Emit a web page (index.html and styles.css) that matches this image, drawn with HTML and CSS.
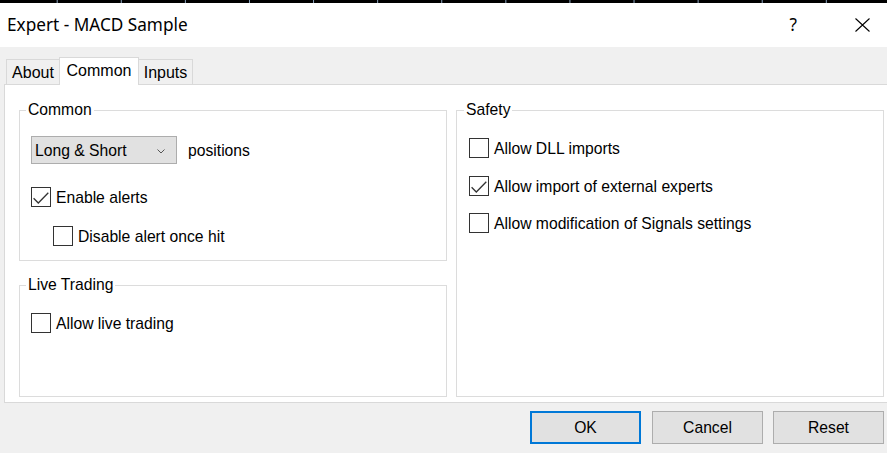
FILE: index.html
```html
<!DOCTYPE html>
<html>
<head>
<meta charset="utf-8">
<title>Expert - MACD Sample</title>
<link rel="stylesheet" href="styles.css">
</head>
<body>
<div class="window">
  <div class="topbar"></div>
  <div class="titlebar">
    <div class="title">Expert - MACD Sample</div>
    <div class="help">?</div>
    <svg class="close" width="15" height="14" viewBox="0 0 15 14"><path d="M0.5 0.5 L14.5 13.5 M14.5 0.5 L0.5 13.5" stroke="#000" stroke-width="1.1" fill="none"/></svg>
  </div>
  <div class="tabs">
    <div class="tab tab-about">About</div>
    <div class="tab tab-common active">Common</div>
    <div class="tab tab-inputs">Inputs</div>
  </div>
  <div class="panel">
    <div class="col-left">
      <fieldset class="group group-common">
        <legend>Common</legend>
        <div class="group-body body-common">
          <div class="row-select">
            <div class="select">
              <span class="select-text">Long &amp; Short</span>
              <svg class="chev" width="8" height="5" viewBox="0 0 8 5"><path d="M0.5 0.5 L4 4 L7.5 0.5" stroke="#555" stroke-width="1" fill="none"/></svg>
            </div>
            <span class="select-label">positions</span>
          </div>
          <div class="check check-enable">
            <span class="box"><svg width="18" height="18" viewBox="0 0 18 18"><path d="M1.6 10.3 L6.3 15 L16.3 4.7" stroke="#333" stroke-width="1.3" fill="none"/></svg></span>
            <span class="label">Enable alerts</span>
          </div>
          <div class="check check-disable">
            <span class="box"></span>
            <span class="label">Disable alert once hit</span>
          </div>
        </div>
      </fieldset>
      <fieldset class="group group-live">
        <legend>Live Trading</legend>
        <div class="group-body body-live">
          <div class="check">
            <span class="box"></span>
            <span class="label">Allow live trading</span>
          </div>
        </div>
      </fieldset>
    </div>
    <fieldset class="group group-safety">
      <legend>Safety</legend>
      <div class="group-body body-safety">
        <div class="check">
          <span class="box"></span>
          <span class="label">Allow DLL imports</span>
        </div>
        <div class="check">
          <span class="box"><svg width="18" height="18" viewBox="0 0 18 18"><path d="M1.6 10.3 L6.3 15 L16.3 4.7" stroke="#333" stroke-width="1.3" fill="none"/></svg></span>
          <span class="label">Allow import of external experts</span>
        </div>
        <div class="check">
          <span class="box"></span>
          <span class="label">Allow modification of Signals settings</span>
        </div>
      </div>
    </fieldset>
  </div>
  <div class="buttons">
    <div class="btn btn-ok">OK</div>
    <div class="btn btn-cancel">Cancel</div>
    <div class="btn btn-reset">Reset</div>
  </div>
</div>
</body>
</html>
```
FILE: styles.css
```css
html, body {
  margin: 0;
  padding: 0;
}
body {
  width: 887px;
  height: 453px;
  overflow: hidden;
  background: #f0f0f0;
  font-family: "Liberation Sans", Arial, sans-serif;
  font-size: 15.7px;
  color: #000;
}
.window {
  width: 887px;
  height: 453px;
  overflow: hidden;
}
.topbar {
  height: 3px;
  background-color: #000;
  background-image: linear-gradient(to right, #8ea6c0 0, #8ea6c0 1px, transparent 1px);
  background-size: 64.1px 3px;
  background-position: 56.7px 0;
}
.titlebar {
  height: 44px;
  background: #fff;
  display: flex;
  align-items: center;
  font-family: "Noto Sans", "Open Sans", sans-serif;
  font-size: 17.2px;
}
.title {
  flex: 1;
  padding-left: 7px;
  line-height: 24px;
}
.help {
  margin-right: 58px;
  line-height: 24px;
}
.close {
  display: block;
  margin-right: 17px;
}
.tabs {
  margin-top: 10px;
  height: 27px;
  padding-left: 6px;
  display: flex;
  align-items: flex-end;
}
.tab {
  box-sizing: border-box;
  height: 25px;
  border: 1px solid #d9d9d9;
  border-bottom: none;
  background: #f0f0f0;
  text-align: center;
  line-height: 25px;
  font-size: 16px;
}
.tab-about { width: 54px; }
.tab-common { width: 80px; margin-left: -1px; }
.tab-inputs { width: 55px; margin-left: -1px; }
.tab.active {
  height: 28px;
  margin-bottom: -1px;
  background: #fff;
  line-height: 26px;
  position: relative;
  z-index: 1;
}
.panel {
  box-sizing: border-box;
  margin-left: 4px;
  width: 887px;
  height: 319px;
  background: #fff;
  border: 1px solid #d9d9d9;
  padding: 16px 0 5px 14px;
  display: grid;
  grid-template-columns: 428px 428px;
  column-gap: 9px;
  align-items: stretch;
}
.col-left {
  display: flex;
  flex-direction: column;
  gap: 15px;
}
.group {
  box-sizing: border-box;
  margin: 0;
  padding: 0;
  min-width: 0;
  border: 1px solid #dcdcdc;
}
.group legend {
  padding: 0 2px;
  margin-left: 6px;
  line-height: 18px;
}
.group-safety legend {
  margin-left: 7px;
}
.group-common {
  height: 160px;
  flex: none;
}
.group-live {
  flex: 1;
}
.group-body {
  display: flex;
  flex-direction: column;
  align-items: flex-start;
}
.body-common {
  padding: 17px 11px 0 11px;
}
.body-live {
  padding: 19px 11px 0 11px;
}
.body-safety {
  padding: 19px 12px 0 12px;
  gap: 17.5px;
}
.row-select {
  display: flex;
  align-items: center;
}
.select {
  box-sizing: border-box;
  width: 146px;
  height: 28px;
  background: #e1e1e1;
  border: 1px solid #adadad;
  display: flex;
  align-items: center;
  padding: 0 11px 0 3px;
}
.select-text {
  flex: 1;
  line-height: 20px;
  padding-top: 2px;
}
.chev {
  display: block;
  margin-top: 3px;
}
.select-label {
  margin-left: 11px;
  line-height: 20px;
  padding-top: 2px;
}
.check {
  display: flex;
  align-items: center;
  height: 20px;
}
.check-enable {
  margin-top: 23px;
}
.check-disable {
  margin-top: 19px;
  margin-left: 22px;
}
.box {
  box-sizing: border-box;
  width: 20px;
  height: 20px;
  border: 1px solid #333;
  background: #fff;
  display: block;
  flex: none;
}
.box svg {
  display: block;
}
.label {
  margin-left: 5px;
  line-height: 20px;
  padding-top: 2px;
  white-space: nowrap;
}
.buttons {
  margin-top: 8px;
  display: flex;
  justify-content: flex-end;
  padding-right: 3px;
}
.btn {
  box-sizing: border-box;
  width: 111px;
  height: 33px;
  background: #e1e1e1;
  border: 1px solid #adadad;
  display: flex;
  align-items: center;
  justify-content: center;
}
.btn-ok {
  border: 2px solid #0078d7;
  margin-right: 11px;
}
.btn-cancel {
  margin-right: 10px;
}
```
